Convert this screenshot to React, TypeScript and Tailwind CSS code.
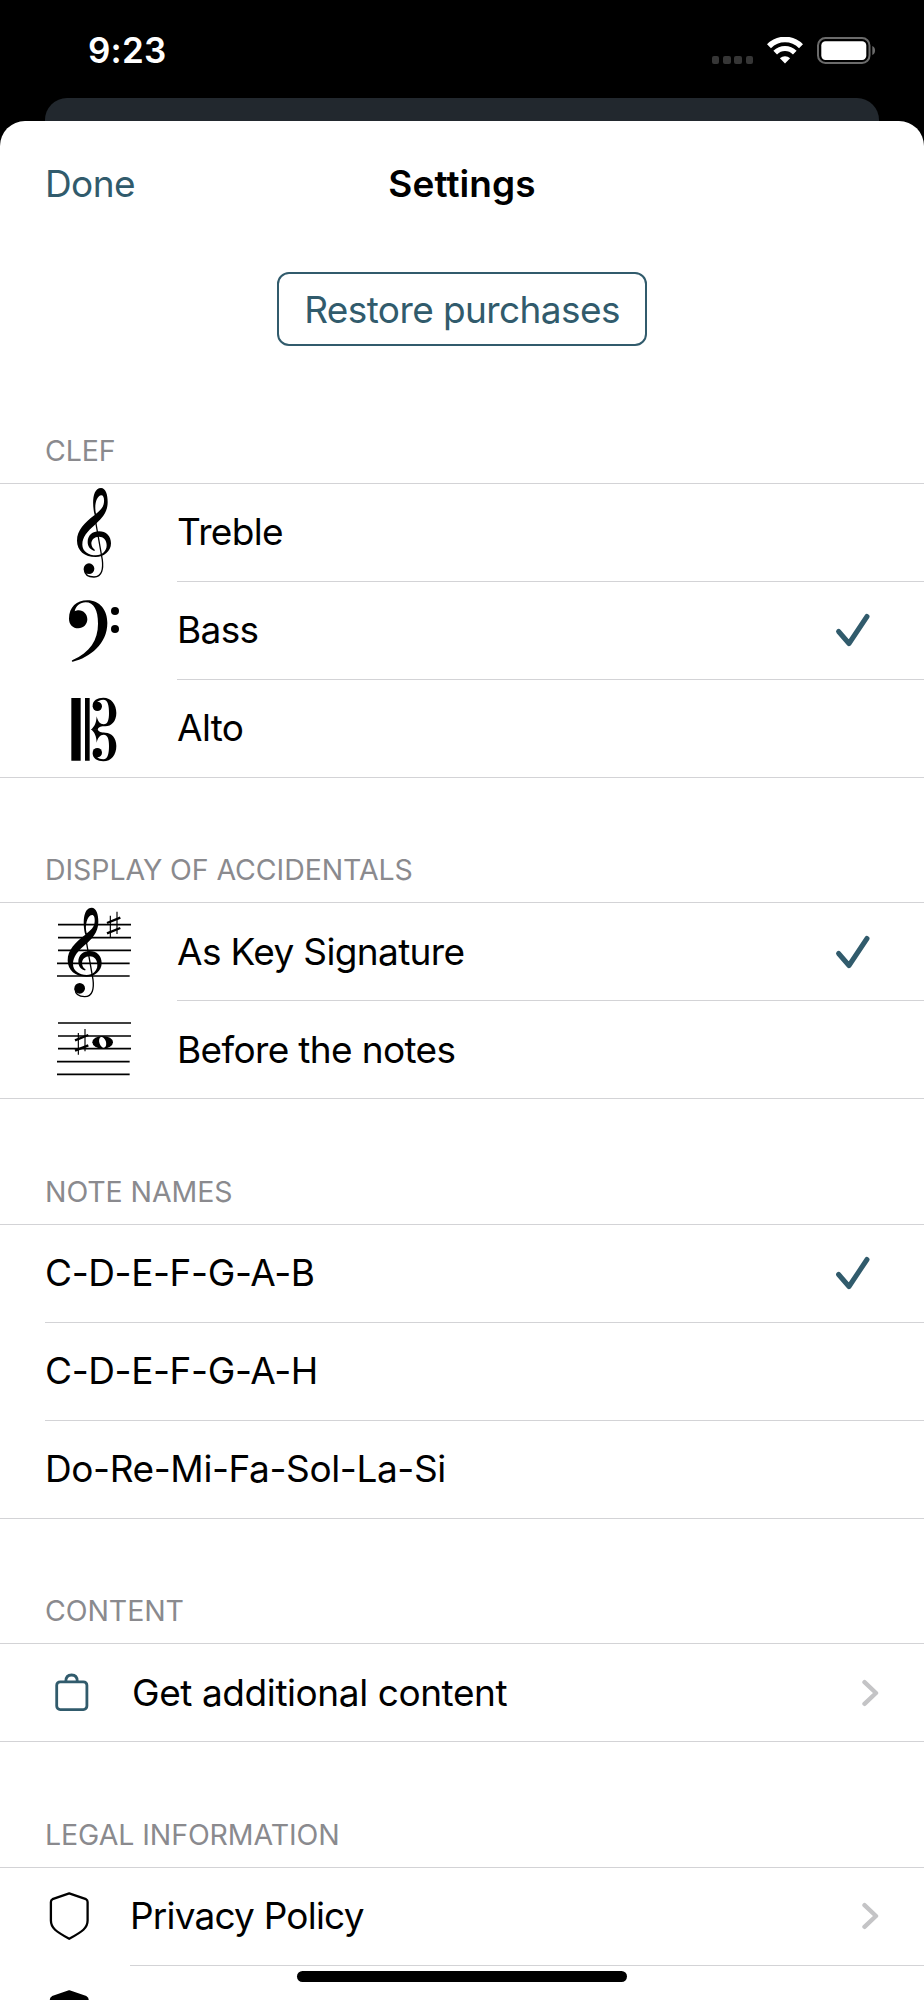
import React, { useState } from "react";

type Option = {
  label: string;
  icon?: React.ReactNode;
};

const LINE = "border-[#d3d3d6]";

function TrebleGlyph() {
  return (
    <>
      <path
        fillRule="evenodd"
        d="M134 105C126 75 126 24 153 24C167 24 173 44 173 66C173 100 152 118 135 134C112 154 97 170 97 194C97 214 116 226 138 226C156 226 170 214 170 196C170 180 160 170 147 170C133 170 124 180 124 190C124 199 129 206 134 209C136 211 134 213 131 212C120 208 113 199 113 186C113 166 128 154 147 154C168 154 183 168 183 190C183 214 162 231 137 231C104 231 81 212 81 182C81 150 104 128 134 105ZM138 101C132 78 139 47 154 46C160 46 163 54 162 66C161 82 150 92 138 101Z"
      />
      <path d="M136 120L157 240C160 264 157 291 132 291C116 291 104 283 103 268" fill="none" stroke="black" strokeWidth="4" />
      <circle cx="117" cy="266" r="16" />
    </>
  );
}

function SharpGlyph() {
  return (
    <>
      <path d="M211 78V143M231 66V133" stroke="black" strokeWidth="3.5" />
      <path d="M201 100L241 84M201 131L241 115" stroke="black" strokeWidth="7" />
    </>
  );
}

function TrebleIcon() {
  return (
    <svg viewBox="-30 12 330 294" className="ml-10 mr-[27px] h-[98px] w-[110px]">
      <TrebleGlyph />
    </svg>
  );
}

function BassIcon() {
  return (
    <svg viewBox="-30 -10 330 294" className="ml-10 mr-[27px] h-[98px] w-[110px]">
      <path d="M57 100C57 65 80 45 112 45C150 45 172 75 172 113C172 175 120 217 68 229C65 229 64 226 68 224C120 200 144 165 144 115C144 75 132 51 107 51C90 51 78 62 74 78C78 75 83 75 86 75C101 75 112 87 112 102C112 117 100 129 85 129C68 129 57 117 57 100Z" />
      <circle cx="195" cy="77" r="12" />
      <circle cx="195" cy="131" r="12" />
    </svg>
  );
}

function AltoIcon() {
  const half =
    "M128 361C128 345 142 337 160 337C184 337 199 357 199 383C199 408 184 423 166 423C154 423 146 424 143 433L123 433C134 424 139 412 140 393C143 408 150 417 161 417C174 417 177 402 177 383C177 362 174 343 160 343C150 343 143 347 140 352Z";
  return (
    <svg viewBox="-30 284 330 294" className="ml-10 mr-[27px] h-[98px] w-[110px]">
      <path d="M64 338H92V526H64ZM105 338H119V526H105Z" />
      <path d={half} />
      <circle cx="142" cy="363" r="14" />
      <g transform="matrix(1 0 0 -1 0 865)">
        <path d={half} />
        <circle cx="142" cy="363" r="14" />
      </g>
    </svg>
  );
}

function KeySignatureIcon() {
  return (
    <svg viewBox="0 40 330 294" className="ml-10 mr-[27px] h-[98px] w-[110px]">
      <path d="M54 105H273M54 144H273M54 182H273M51 221H269M51 259H269" stroke="black" strokeWidth="4.8" />
      <g transform="translate(2 30)">
        <TrebleGlyph />
      </g>
      <SharpGlyph />
    </svg>
  );
}

function BeforeNotesIcon() {
  return (
    <svg viewBox="0 334 330 294" className="ml-10 mr-[27px] h-[98px] w-[110px]">
      <path d="M54 400H273M54 439H273M54 477H273M51 516H269M51 554H269" stroke="black" strokeWidth="4.8" />
      <g transform="translate(-96 352)">
        <SharpGlyph />
      </g>
      <ellipse cx="188" cy="458" rx="31" ry="19" />
      <ellipse cx="188" cy="458" rx="10" ry="16.5" fill="white" transform="rotate(-18 188 458)" />
    </svg>
  );
}

function BagIcon() {
  return (
    <svg viewBox="40 0 92 98" className="ml-10 h-[98px] w-[92px]" fill="none" stroke="#315b6c" strokeWidth="2.8">
      <rect x="56.7" y="37.8" width="30.2" height="27.8" rx="3.5" />
      <path d="M65.8 37.5C65.8 33.5 68 31 71.6 31C75.2 31 77.3 33.5 77.3 37.5" />
    </svg>
  );
}

function ShieldIcon({ filled = false }: { filled?: boolean }) {
  return (
    <svg
      viewBox="40 0 90 98"
      className="ml-10 h-[98px] w-[90px]"
      fill={filled ? "black" : "none"}
      stroke="black"
      strokeWidth="2.3"
      strokeLinejoin="round"
    >
      <path d="M69.2 25.4L86 31.2Q87.6 32 87.6 34V52.5C87.6 60 82.5 63.5 69.2 70.8C56 63.5 50.9 60 50.9 52.5V34Q50.9 32 52.5 31.2Z" />
    </svg>
  );
}

function Check() {
  return (
    <svg viewBox="0 0 36 36" className="mr-[53px] h-9 w-9" fill="none" stroke="#315b6c" strokeWidth="5" strokeLinecap="round" strokeLinejoin="round">
      <path d="M3.6 19.5L14 31.5L32 4.5" />
    </svg>
  );
}

function Chevron() {
  return (
    <svg viewBox="0 0 18 28" className="mr-[45px] h-7 w-[18px]" fill="none" stroke="#c4c4c6" strokeWidth="4.4" strokeLinecap="round" strokeLinejoin="round">
      <path d="M3.5 3.2L15 14L3.5 24.8" />
    </svg>
  );
}

function SectionHeader({ title }: { title: string }) {
  return (
    <h2
      className={`flex h-[125.5px] items-end border-b ${LINE} pb-[14px] pl-[45px] text-[28.5px] leading-[36px] tracking-[-0.08px] text-[#8a8a8e]`}
    >
      {title}
    </h2>
  );
}

function OptionList({ options, initial, tracking = "tracking-[-0.65px]" }: { options: Option[]; initial: number; tracking?: string }) {
  const [selected, setSelected] = useState(initial);

  return (
    <ul>
      {options.map(({ label, icon }, i) => {
        const last = i === options.length - 1;
        return (
          <li
            key={label}
            onClick={() => setSelected(i)}
            className={`flex h-[98px] cursor-pointer ${last ? `border-b ${LINE}` : ""}`}
          >
            {icon ?? <span className="w-[45px]" />}
            <div className={`flex flex-1 items-center justify-between ${last ? "" : `border-b ${LINE}`}`}>
              <span className={`text-[37px] ${tracking}`}>{label}</span>
              {selected === i && <Check />}
            </div>
          </li>
        );
      })}
    </ul>
  );
}

function StatusBar() {
  return (
    <div className="flex h-[98px] shrink-0 items-start justify-between pl-[88px] pr-[47px] pt-[28px] text-white">
      <span className="text-[35px] font-semibold leading-[45px] tracking-[0.2px]">9:23</span>
      <div className="flex pt-[9px]">
        <div className="flex gap-[3.7px] pt-[19px]">
          <span className="h-[7.5px] w-[7.5px] rounded-[2px] bg-[#363636]" />
          <span className="h-[7.5px] w-[7.5px] rounded-[2px] bg-[#363636]" />
          <span className="h-[7.5px] w-[7.5px] rounded-[2px] bg-[#363636]" />
          <span className="h-[7.5px] w-[7.5px] rounded-[2px] bg-[#363636]" />
        </div>
        <svg viewBox="0 0 36 27" className="ml-[14px] h-[27px] w-9" fill="none" stroke="white">
          <path d="M2 9.2C11 .2 25 .2 34 9.2" strokeWidth="5.6" />
          <path d="M8.2 15.6C13.8 10.1 22.2 10.1 27.8 15.6" strokeWidth="5.2" />
          <path d="M18 26.5L12.9 21.3C15.8 18.5 20.2 18.5 23.1 21.3Z" fill="white" stroke="none" />
        </svg>
        <svg viewBox="0 0 60 27" className="ml-[14px] h-[27px] w-[60px]">
          <rect x="1" y="1" width="51.5" height="25" rx="7.5" fill="none" stroke="#6b6b6b" strokeWidth="2" />
          <rect x="4.3" y="4.2" width="45" height="18.8" rx="4.2" fill="white" />
          <path d="M55.3 9C59 10.5 59 16.5 55.3 18Z" fill="#6b6b6b" />
        </svg>
      </div>
    </div>
  );
}

export default function App() {
  return (
    <div className="relative flex h-[2000px] w-[924px] flex-col overflow-hidden bg-black font-['Inter','Liberation_Sans',sans-serif] text-black">
      <StatusBar />
      <div className="mx-[45px] h-[60px] shrink-0 rounded-t-[22px] bg-[#22282e]" />

      <main className="z-10 -mt-[37px] flex-1 rounded-t-[25px] bg-white">
        <header className="grid h-[126px] grid-cols-3 items-center px-[45px] pb-px">
          <button className="justify-self-start text-[37px] tracking-[-0.6px] text-[#315b6c]">Done</button>
          <h1 className="justify-self-center text-[37px] font-semibold tracking-[0.1px]">Settings</h1>
        </header>

        <div className="flex justify-center pb-3 pt-[25px]">
          <button className="h-[74px] w-[370px] rounded-[12px] border-2 border-[#315b6c] pt-[2px] text-[37px] tracking-[-0.6px] text-[#315b6c]">
            Restore purchases
          </button>
        </div>

        <SectionHeader title="CLEF" />
        <OptionList
          initial={1}
          options={[
            { label: "Treble", icon: <TrebleIcon /> },
            { label: "Bass", icon: <BassIcon /> },
            { label: "Alto", icon: <AltoIcon /> },
          ]}
        />

        <SectionHeader title="DISPLAY OF ACCIDENTALS" />
        <OptionList
          initial={0}
          options={[
            { label: "As Key Signature", icon: <KeySignatureIcon /> },
            { label: "Before the notes", icon: <BeforeNotesIcon /> },
          ]}
        />

        <SectionHeader title="NOTE NAMES" />
        <OptionList
          initial={0}
          tracking="tracking-[-0.4px]"
          options={[{ label: "C-D-E-F-G-A-B" }, { label: "C-D-E-F-G-A-H" }, { label: "Do-Re-Mi-Fa-Sol-La-Si" }]}
        />

        <SectionHeader title="CONTENT" />
        <div className={`flex h-[98px] items-center border-b ${LINE}`}>
          <BagIcon />
          <span className="flex-1 text-[37px] tracking-[-0.42px]">Get additional content</span>
          <Chevron />
        </div>

        <SectionHeader title="LEGAL INFORMATION" />
        <div className="flex h-[98px]">
          <ShieldIcon />
          <div className={`flex flex-1 items-center border-b ${LINE}`}>
            <span className="flex-1 text-[37px] tracking-[-0.8px]">Privacy Policy</span>
            <Chevron />
          </div>
        </div>
        <div className="flex h-[98px]">
          <ShieldIcon filled />
        </div>
      </main>

      {/* Home indicator */}
      <div className="absolute bottom-[18px] left-[297px] z-20 h-[11px] w-[330px] rounded-full bg-black" />
    </div>
  );
}
